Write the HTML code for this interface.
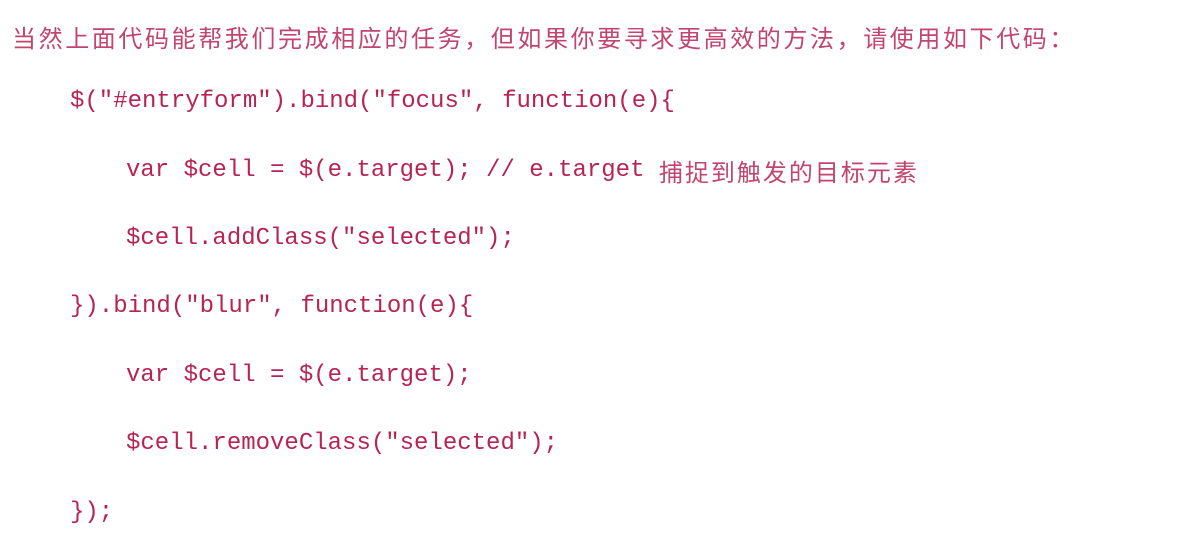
<!DOCTYPE html>
<html><head><meta charset="utf-8"><style>
body{margin:0;width:1198px;height:540px;background:#fff;overflow:hidden;position:relative}
.h{position:absolute;left:12px;top:19px;font:24px "Liberation Sans","Noto Sans CJK SC",sans-serif;color:#c1456c;white-space:nowrap;letter-spacing:2.6px}
.c{position:absolute;font:24px "Liberation Mono","DejaVu Sans Mono",monospace;color:#b82452;white-space:pre;line-height:30px}
.z{font:24px "Noto Sans CJK SC",sans-serif;color:#c1456c;letter-spacing:2px;vertical-align:top;line-height:30px}
</style></head><body>
<div class="h">当然上面代码能帮我们完成相应的任务，但如果你要寻求更高效的方法，请使用如下代码：</div>
<div class="c" style="left:70px;top:87px">$("#entryform").bind("focus", function(e){</div>
<div class="c" style="left:126px;top:156px">var $cell = $(e.target); // e.target <span class="z">捕捉到触发的目标元素</span></div>
<div class="c" style="left:126px;top:224px">$cell.addClass("selected");</div>
<div class="c" style="left:70px;top:292px">}).bind("blur", function(e){</div>
<div class="c" style="left:126px;top:361px">var $cell = $(e.target);</div>
<div class="c" style="left:126px;top:429px">$cell.removeClass("selected");</div>
<div class="c" style="left:70px;top:498px">});</div>
</body></html>
